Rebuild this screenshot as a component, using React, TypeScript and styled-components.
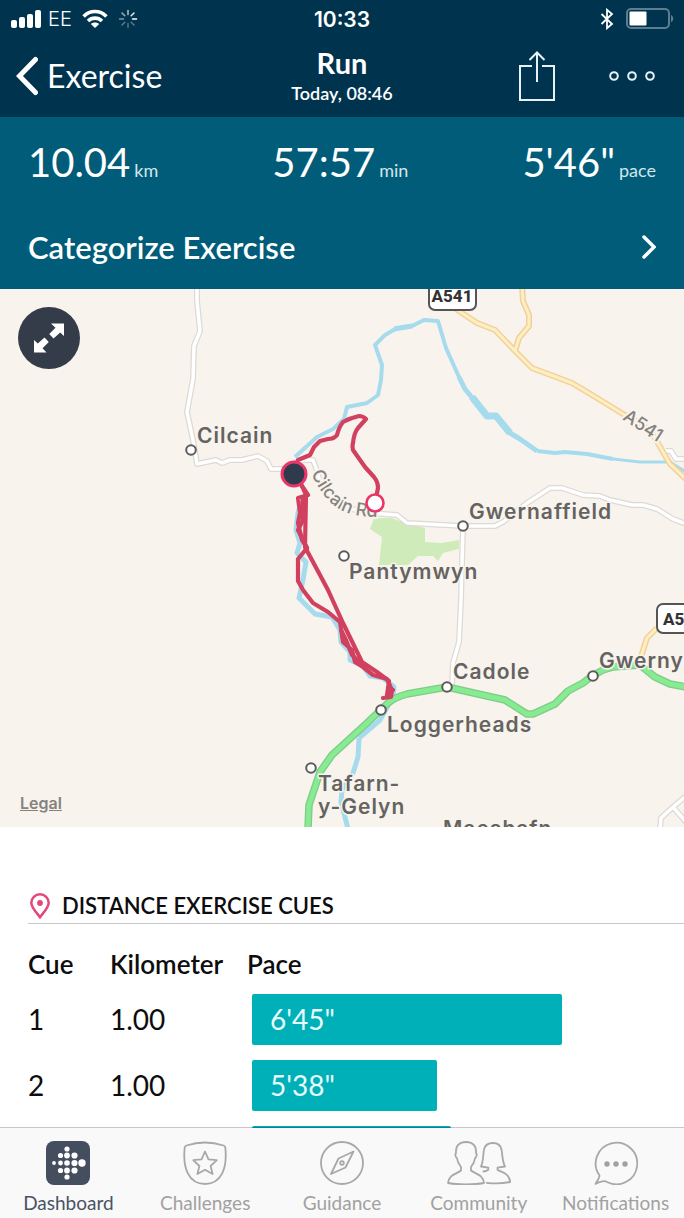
import React from "react";
import styled, { createGlobalStyle } from "styled-components";

const GlobalStyle = createGlobalStyle`
  *, *::before, *::after { box-sizing: border-box; }
  body { margin: 0; background: #fff; font-family: Lato, "Open Sans", sans-serif; color: #0d0d0f; }
  button { font: inherit; color: inherit; background: none; border: 0; padding: 0; cursor: pointer; }
  svg { display: block; }
`;

const Screen = styled.div`
  display: flex;
  flex-direction: column;
  height: 100vh;
  overflow: hidden;
`;

const Header = styled.header`
  flex: none;
  background: #00334e;
  color: #fff;
`;

const StatusBar = styled.div`
  display: grid;
  grid-template-columns: 1fr auto 1fr;
  align-items: center;
  height: 38px;
  padding: 0 10px;
`;

const StatusGroup = styled.div<{ $end?: boolean }>`
  display: flex;
  align-items: center;
  gap: ${(p) => (p.$end ? 12 : 10)}px;
  justify-content: ${(p) => (p.$end ? "flex-end" : "flex-start")};
`;

const Carrier = styled.div`
  display: flex;
  align-items: center;
  gap: 6px;
  font-family: Inter, sans-serif;
  font-size: 20px;
  font-weight: 300;
`;

const Clock = styled.time`
  font-family: Inter, sans-serif;
  font-size: 21px;
  font-weight: 600;
`;

const NavBar = styled.div`
  display: grid;
  grid-template-columns: 1fr auto 1fr;
  align-items: center;
  height: 79px;
  padding: 0 28px 3px;
`;

const BackButton = styled.button`
  display: flex;
  align-items: center;
  gap: 9px;
  margin-left: -12px;
  font-size: 32px;
  line-height: 40px;
`;

const TitleBlock = styled.div`
  text-align: center;
`;

const Title = styled.h1`
  margin: 0;
  font-size: 29px;
  line-height: 34px;
  font-weight: 700;
`;

const Subtitle = styled.p`
  margin: 0;
  font-size: 18px;
  line-height: 26px;
  font-weight: 600;
`;

const NavActions = styled.div`
  display: flex;
  align-items: center;
  justify-content: flex-end;
  gap: 53px;
`;

const Content = styled.main`
  flex: 1;
  min-height: 0;
  overflow-y: auto;
  scrollbar-width: none;
`;

const Summary = styled.section`
  background: #005c78;
  color: #fff;
`;

const Stats = styled.div`
  display: flex;
  justify-content: space-between;
  padding: 20px 28px 0;
  height: 90px;
`;

const Stat = styled.p`
  margin: 0;
  font-size: 40px;
  line-height: 50px;
`;

const Unit = styled.span`
  margin-left: 4px;
  font-size: 18px;
  color: #d3e6ee;
`;

const CategorizeButton = styled.button`
  display: flex;
  align-items: center;
  justify-content: space-between;
  width: 100%;
  height: 82px;
  padding: 0 28px 2px;
  font-size: 31px;
  line-height: 38px;
  font-weight: 600;
`;

const MapPanel = styled.section`
  position: relative;
  height: 538px;
  background: #f8f4ed;
  overflow: hidden;
`;

const MapDrawing = styled.svg`
  width: 100%;
  height: 100%;
`;

const ExpandButton = styled.button`
  position: absolute;
  top: 18px;
  left: 18px;
  width: 62px;
  height: 62px;
  display: grid;
  place-items: center;
  border-radius: 50%;
  background: #343c49;
`;

const LegalLink = styled.a`
  position: absolute;
  left: 20px;
  bottom: 14px;
  font: 600 16px/20px Inter, sans-serif;
  color: #85827e;
`;

const PlaceLabel = styled.text`
  font: 600 21px Inter, sans-serif;
  letter-spacing: 1px;
  fill: #656361;
  stroke: #f8f4ed;
  stroke-width: 3px;
  paint-order: stroke;
`;

const RoadLabel = styled.text`
  font: 500 18px Inter, sans-serif;
  fill: #85827e;
  stroke: #f8f4ed;
  stroke-width: 4px;
  paint-order: stroke;
`;

const ShieldLabel = styled.text`
  font: 800 17px Roboto, sans-serif;
  fill: #333;
`;

const Cues = styled.section`
  padding: 65px 0 0 28px;
`;

const CuesHeading = styled.h2`
  display: flex;
  align-items: center;
  gap: 12px;
  margin: 0;
  padding-left: 2px;
  height: 32px;
  border-bottom: 1px solid #c8c8c8;
  padding-bottom: 4px;
  font-size: 22px;
  line-height: 26px;
  font-weight: 600;
`;

const CueTable = styled.table`
  width: 100%;
  margin-top: 18px;
  border-collapse: collapse;
  table-layout: fixed;
`;

const HeadCell = styled.th<{ $width?: number }>`
  width: ${(p) => (p.$width ? `${p.$width}px` : "auto")};
  height: 44px;
  padding: 0;
  text-align: left;
  font-size: 26px;
  line-height: 32px;
  font-weight: 600;
`;

const Cell = styled.td`
  height: 66px;
  padding: 0;
  font-size: 28px;
  line-height: 34px;
`;

const BarCell = styled(Cell)`
  padding: 0 28px 0 5px;
`;

const PaceBar = styled.div`
  height: 51px;
  padding-left: 18px;
  border-radius: 2px;
  background: #00b0b9;
  color: #e9fbfc;
  line-height: 50px;
`;

const TabBar = styled.nav`
  position: relative;
  flex: none;
  display: grid;
  grid-template-columns: repeat(5, 1fr);
  height: 91px;
  margin-top: -1px;
  border-top: 1px solid rgba(0, 0, 0, 0.22);
  background: #f9f9f9;
  background-clip: padding-box;
`;

const Tab = styled.button<{ $active?: boolean }>`
  display: flex;
  flex-direction: column;
  align-items: center;
  gap: 4px;
  padding-top: 13px;
  font-size: 19px;
  line-height: 28px;
  color: ${(p) => (p.$active ? "#4a5363" : "#a1a1a1")};
`;

const SignalIcon = () => (
  <svg width="32" height="20" viewBox="0 0 32 20" fill="#fff" aria-hidden="true">
    <rect x="1" y="11" width="6" height="8" rx="2" />
    <rect x="9" y="8" width="6" height="11" rx="2" />
    <rect x="17" y="5" width="6" height="14" rx="2" />
    <rect x="25" y="1" width="6" height="18" rx="2" />
  </svg>
);

const WifiIcon = () => (
  <svg width="26" height="20" viewBox="0 0 26 20" fill="none" stroke="#fff" strokeWidth="3.6" aria-hidden="true">
    <path d="M1.6 7.4C8 .9 18 .9 24.4 7.4" />
    <path d="M6 12C10 8.2 16 8.2 20 12" />
    <path d="M13 19l-4.2-4.1c2.4-2 6-2 8.4 0z" fill="#fff" stroke="none" />
  </svg>
);

const SpinnerIcon = () => (
  <svg width="20" height="20" viewBox="-10 -10 20 20" stroke="#fff" strokeWidth="1.5" strokeLinecap="round" aria-hidden="true">
    {[0.7, 0.9, 1, 0.35, 0.3, 0.35, 0.5, 0.6].map((opacity, i) => (
      <line key={i} y1="-4.5" y2="-8.5" opacity={opacity} transform={`rotate(${i * 45})`} />
    ))}
  </svg>
);

const BluetoothIcon = () => (
  <svg width="14" height="22" viewBox="0 0 14 22" fill="none" stroke="#fff" strokeWidth="1.8" aria-hidden="true">
    <path d="M1.5 6l10.500 10-5 4.200V1.800L12 6 1.500 16" />
  </svg>
);

const BatteryIcon = () => (
  <svg width="48" height="22" viewBox="0 0 48 22" aria-hidden="true">
    <rect x="1" y="1" width="42" height="19" rx="4" fill="none" stroke="#5d7d90" strokeWidth="2" />
    <rect x="3.5" y="3.5" width="17" height="14" rx="1" fill="#fff" />
    <path d="M45 7c3 1.200 3 6 0 7.200z" fill="#5d7d90" />
  </svg>
);

const BackIcon = () => (
  <svg width="22" height="40" viewBox="0 0 22 40" fill="none" stroke="#fff" strokeWidth="5" strokeLinecap="round" strokeLinejoin="miter" aria-hidden="true">
    <path d="M19.500 3.500L3.500 20l16 16.500" />
  </svg>
);

const ShareIcon = () => (
  <svg width="36" height="50" viewBox="0 0 36 50" fill="none" stroke="#e8f1f5" strokeWidth="2" aria-hidden="true">
    <path d="M13 15H1v34h34V15H23M18 31V2M10.500 9L18 1.500 25.500 9" />
  </svg>
);

const MoreIcon = () => (
  <svg width="48" height="12" viewBox="0 0 48 12" fill="none" stroke="#e8f1f5" strokeWidth="2" aria-hidden="true">
    <circle cx="6" cy="6" r="3.8" />
    <circle cx="24" cy="6" r="3.8" />
    <circle cx="42" cy="6" r="3.8" />
  </svg>
);

const ChevronIcon = () => (
  <svg width="16" height="26" viewBox="0 0 16 26" fill="none" stroke="#fff" strokeWidth="3.5" strokeLinecap="round" aria-hidden="true">
    <path d="M4 3l10 10L4 23" />
  </svg>
);

const ExpandIcon = () => (
  <svg width="32" height="32" viewBox="0 0 32 32" fill="#fff" aria-hidden="true">
    <path d="M18 1.500H31V14L27.200 10.400 20.500 16.500 16.200 12 22.500 5.800zM13.500 30.500H1V18L4.800 21.600 11.500 15.500 15.800 20 9.500 26.200z" />
  </svg>
);

const PinIcon = () => (
  <svg width="20" height="26" viewBox="0 0 20 26" fill="none" stroke="#e4487a" strokeWidth="2.5" aria-hidden="true">
    <path d="M10 24.200C7.500 20.500 1.300 15 1.300 9.800a8.700 8.500 0 0 1 17.400 0c0 5.200-6.200 10.700-8.700 14.400z" />
    <circle cx="10" cy="10" r="2.9" fill="#e4487a" stroke="none" />
  </svg>
);

const logoDots: [number, number, number][] = [
  [21, 8, 2.6], [14.5, 14.5, 2.6], [21, 14.5, 2.9], [28.5, 14.5, 3.1],
  [8, 22, 1.9], [14.5, 22, 2.4], [21, 22, 2.8], [28.5, 22, 3.1], [36, 22, 3.7],
  [14.5, 29.5, 2.6], [21, 29.5, 2.9], [28.5, 29.5, 3.1], [21, 36, 2.6],
];

const DashboardIcon = () => (
  <svg width="44" height="44" viewBox="0 0 44 44" aria-hidden="true">
    <rect width="44" height="44" rx="8" fill="#454e5f" />
    {logoDots.map(([x, y, r], i) => (
      <circle key={i} cx={x} cy={y} r={r} fill="#fff" />
    ))}
  </svg>
);

const OutlineIcon = styled.svg.attrs({ fill: "none", stroke: "#a8a8a8", strokeWidth: 1.8, strokeLinejoin: "round", strokeLinecap: "round" })``;

const ChallengesIcon = () => (
  <OutlineIcon width="44" height="44" viewBox="0 0 44 44" aria-hidden="true">
    <path d="M3.500 4.500C15 .8 29 .8 40.500 4.500c1 .4 1.600 1 1.800 2C44.500 27 38.500 43 22 43S-.5 27 1.700 6.500c.2-1 .8-1.600 1.800-2z" />
    <path d="M22 10.500l3.500 7.800 8.300.8-6.200 5.900 2 8-7.600-4.200-7.600 4.200 2-8-6.200-5.900 8.300-.8z" />
  </OutlineIcon>
);

const GuidanceIcon = () => (
  <OutlineIcon width="44" height="44" viewBox="0 0 44 44" aria-hidden="true">
    <circle cx="22" cy="22" r="21" />
    <path d="M33.500 10.500L25.500 26.500 11 33l7.500-15.500z" />
    <circle cx="22" cy="22" r="1.8" />
  </OutlineIcon>
);

const CommunityIcon = () => (
  <OutlineIcon width="64" height="44" viewBox="0 0 64 44" aria-hidden="true">
    <path d="M19 1c6.500 0 10.500 3.500 10 11 1 1 .8 4-.9 5-.5 4-2 6.500-4.100 9v3.500c4 3.500 12 3.500 13 12.500-9 1.800-27 1.800-36 0 1-9 9-9 13-12.500V26c-2.100-2.500-3.600-5-4.100-9-1.700-1-1.900-4-.9-5C8.500 4.500 12.500 1 19 1z" />
    <path d="M36.500 30.500c1.800-.3 3.500-.8 4.800-1.800v-2l-7.300-1.200c2.500-5 2-12 3-17 1-4.500 4.500-6.500 9-6.500s7.500 2 8.500 6.500c1 5 .7 12 3.500 17l-7.500 1.200v2c4.500 3 11.500 3 12.700 12.300-7.500 1.500-15.500 1.700-23.500.8" />
  </OutlineIcon>
);

const NotificationsIcon = () => (
  <OutlineIcon width="44" height="44" viewBox="0 0 44 44" aria-hidden="true">
    <path d="M5.500 34.500A20.800 20.800 0 1 1 13 41c-2.500-1.800-8 .2-11.500 1.900 1.700-2.900 4-5.900 4-8.400z" />
    <g fill="#a1a1a1" stroke="none">
      <circle cx="13" cy="23" r="2.7" />
      <circle cx="22" cy="23" r="2.7" />
      <circle cx="31" cy="23" r="2.7" />
    </g>
  </OutlineIcon>
);

const minorRoads = [
  "M197 286L197 301L200 331L194 346L193 379L187 412L193 440L197 464L216 460L222 463L230 460L242 460L258 456L267 461L271 469L282 469L303 460H313L316 468L320 482L343 507L370 513L397 515L407 523L463 526H495L503 522L527 503L550 488H562L583 495L600 496L610 500L632 505H643L657 509L673 519L686 524",
  "M463 526L461 600L459 642L453 663L452 685",
  "M660 829L661 818L673 807L686 796M673 807L686 822",
  "M666 451H671L676 459H686",
];

const mainRoads = [
  "M522 286L523 301L529 315V326L519 338L515 351",
  "M453 307L477 323L495 330L515 351L532 368L572 383L597 398L623 414C640 422 650 430 655 438L670 464L686 479",
  "M640 660L647 638L657 628",
];

const trunkRoad =
  "M308 829L309 805L320 772L332 755L367 723L388 703C394 698 400 696 407 694L447 687L505 700L527 714H533L555 704L568 691L583 683L592 676L603 670L613 667L640 665L655 677L670 684L686 687";

const rivers: { d: string; width: number }[] = [
  { d: "M295 457L307 446L317 437L333 429L344 419L347 407L367 403L378 395L381 380L382 365L375 345L385 335L397 328L412 326L424 320L438 321L446 348L459 377L465 390", width: 4 },
  { d: "M394 329L412 326", width: 5 },
  { d: "M459 377L465 389L487 416L496 416L510 433L520 439L537 451", width: 5 },
  { d: "M472 397L487 416L496 416L510 433", width: 7 },
  { d: "M537 451L555 453L565 452L587 454L613 459", width: 4 },
  { d: "M613 459L640 462L670 462L686 472", width: 3 },
  { d: "M302 500L298 513L296 530L300 543L297 553L306 562L303 580L299 598L315 614L332 617L340 630L341 642L350 652L350 660L363 666L370 676L383 678L394 687L393 697L380 720L359 738", width: 5 },
  { d: "M359 738L358 757L353 773L342 790L341 802L345 817L348 829", width: 5 },
];

const route = [
  "M375 503L378 488Q378 482 374 477L365 467L353 450Q352 446 353 443Q354 433 358 428L366 419Q363 416 359 416Q350 418 343 422Q339 427 337 435Q334 439 328 439L320 441L314 447L310 455L298 460L294 474L302 486L308 495L298 498L300 513L298 523L302 540L307 548L298 559V581L303 590L313 603L328 612L340 622L343 642L352 650L355 662L363 667L373 675L387 679L392 690L391 697L383 698",
  "M302 486L306 495L305 547L328 590L343 623L362 662L377 672L389 681L387 695L393 690",
  "M303 497V520L298 530L307 548M341 630L346 640L352 655L362 664",
];

const towns: [number, number][] = [
  [191, 450], [463, 526], [344, 556], [447, 687], [593, 676], [381, 710], [311, 768],
];

const places: { name: string; x: number; y: number }[] = [
  { name: "Cilcain", x: 197, y: 443 },
  { name: "Gwernaffield", x: 469, y: 519 },
  { name: "Pantymwyn", x: 349, y: 579 },
  { name: "Cadole", x: 453, y: 679 },
  { name: "Gwerny", x: 599, y: 668 },
  { name: "Loggerheads", x: 387, y: 732 },
  { name: "Tafarn-", x: 318, y: 791 },
  { name: "y-Gelyn", x: 318, y: 814 },
  { name: "Maeshafn", x: 443, y: 836 },
];

const RouteMap = () => (
  <MapDrawing viewBox="0 289 684 538" preserveAspectRatio="xMidYMid slice" role="img" aria-label="Route map" fill="none" strokeLinejoin="round">
    <path d="M374 518H392L407 524L425 528V542L442 543L459 540V549L443 553L438 561L433 556H418L408 565H379L382 537L370 529Z" fill="#cfebba" />
    {rivers.map((r) => (
      <path key={r.d} d={r.d} stroke="#a6dbed" strokeWidth={r.width} />
    ))}
    {minorRoads.map((d) => (
      <path key={d} d={d} stroke="#ddd9d4" strokeWidth="6" />
    ))}
    {minorRoads.map((d) => (
      <path key={d} d={d} stroke="#fff" strokeWidth="3.5" />
    ))}
    {mainRoads.map((d) => (
      <path key={d} d={d} stroke="#f2d09c" strokeWidth="6" />
    ))}
    {mainRoads.map((d) => (
      <path key={d} d={d} stroke="#fdefc0" strokeWidth="3" />
    ))}
    <path d={trunkRoad} stroke="#7fcb88" strokeWidth="7.5" />
    <path d={trunkRoad} stroke="#86eb91" strokeWidth="5" />
    <path id="cilcain-road" d="M311 473C320 493 333 510 352 514C364 517 376 517 396 517" />
    <RoadLabel>
      <textPath href="#cilcain-road">Cilcain Rd</textPath>
    </RoadLabel>
    <RoadLabel transform="translate(622 419) rotate(33)">A541</RoadLabel>
    <g fill="#fff" stroke="#555" strokeWidth="2">
      <rect x="429" y="280" width="47" height="30" rx="6" />
      <rect x="657" y="604" width="47" height="29" rx="6" />
    </g>
    <ShieldLabel x="452" y="302" textAnchor="middle">A541</ShieldLabel>
    <ShieldLabel x="663" y="625">A51</ShieldLabel>
    {places.map((p) => (
      <PlaceLabel key={p.name} x={p.x} y={p.y}>{p.name}</PlaceLabel>
    ))}
    {towns.map(([x, y]) => (
      <circle key={x} cx={x} cy={y} r="4.8" fill="#fff" stroke="#5d5b59" strokeWidth="2" />
    ))}
    {route.map((d) => (
      <path key={d} d={d} stroke="#d2405f" strokeWidth="4.2" strokeLinecap="round" />
    ))}
    <circle cx="294" cy="474" r="12" fill="#2f3b4c" stroke="#e8366b" strokeWidth="3" />
    <circle cx="375" cy="503" r="8.5" fill="#fff" stroke="#e8366b" strokeWidth="2.6" />
  </MapDrawing>
);

const cues = [
  { cue: 1, distance: "1.00", pace: `6'45"`, share: 76.7 },
  { cue: 2, distance: "1.00", pace: `5'38"`, share: 45.8 },
  { cue: 3, distance: "1.00", pace: `5'45"`, share: 49.3 },
];

const tabs = [
  { label: "Dashboard", Icon: DashboardIcon },
  { label: "Challenges", Icon: ChallengesIcon },
  { label: "Guidance", Icon: GuidanceIcon },
  { label: "Community", Icon: CommunityIcon },
  { label: "Notifications", Icon: NotificationsIcon },
];

export default function App() {
  return (
    <Screen>
      <GlobalStyle />
      <Header>
        <StatusBar>
          <StatusGroup>
            <Carrier>
              <SignalIcon />
              EE
            </Carrier>
            <WifiIcon />
            <SpinnerIcon />
          </StatusGroup>
          <Clock>10:33</Clock>
          <StatusGroup $end>
            <BluetoothIcon />
            <BatteryIcon />
          </StatusGroup>
        </StatusBar>
        <NavBar>
          <BackButton>
            <BackIcon />
            Exercise
          </BackButton>
          <TitleBlock>
            <Title>Run</Title>
            <Subtitle>Today, 08:46</Subtitle>
          </TitleBlock>
          <NavActions>
            <button aria-label="Share"><ShareIcon /></button>
            <button aria-label="More"><MoreIcon /></button>
          </NavActions>
        </NavBar>
      </Header>
      <Content>
        <Summary>
          <Stats>
            <Stat>10.04<Unit>km</Unit></Stat>
            <Stat>57:57<Unit>min</Unit></Stat>
            <Stat>5'46"<Unit>pace</Unit></Stat>
          </Stats>
          <CategorizeButton>
            Categorize Exercise
            <ChevronIcon />
          </CategorizeButton>
        </Summary>
        <MapPanel>
          <RouteMap />
          <ExpandButton aria-label="Expand map"><ExpandIcon /></ExpandButton>
          <LegalLink href="#legal">Legal</LegalLink>
        </MapPanel>
        <Cues>
          <CuesHeading>
            <PinIcon />
            DISTANCE EXERCISE CUES
          </CuesHeading>
          <CueTable>
            <thead>
              <tr>
                <HeadCell $width={82}>Cue</HeadCell>
                <HeadCell $width={137}>Kilometer</HeadCell>
                <HeadCell>Pace</HeadCell>
              </tr>
            </thead>
            <tbody>
              {cues.map((c) => (
                <tr key={c.cue}>
                  <Cell>{c.cue}</Cell>
                  <Cell>{c.distance}</Cell>
                  <BarCell>
                    <PaceBar style={{ width: `${c.share}%` }}>{c.pace}</PaceBar>
                  </BarCell>
                </tr>
              ))}
            </tbody>
          </CueTable>
        </Cues>
      </Content>
      <TabBar>
        {tabs.map(({ label, Icon }, i) => (
          <Tab key={label} $active={i === 0}>
            <Icon />
            {label}
          </Tab>
        ))}
      </TabBar>
    </Screen>
  );
}
